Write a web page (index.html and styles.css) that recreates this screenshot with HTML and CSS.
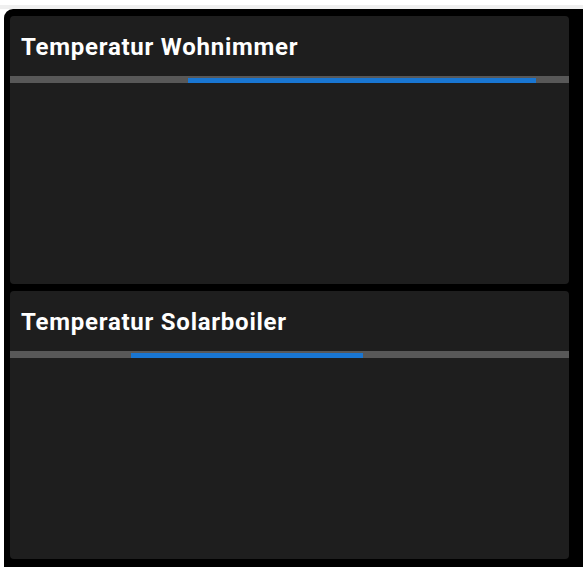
FILE: index.html
```html
<!DOCTYPE html>
<html>
<head>
<meta charset="utf-8">
<link rel="stylesheet" href="styles.css">
</head>
<body>
<div class="topbar"></div>
<main class="panel">
  <section class="card">
    <h2 class="card-title">Temperatur Wohnimmer</h2>
    <div class="progress"><div class="progress-fill" style="margin-left:178px;width:348px"></div></div>
    <div class="card-body"></div>
  </section>
  <section class="card">
    <h2 class="card-title">Temperatur Solarboiler</h2>
    <div class="progress"><div class="progress-fill" style="margin-left:121px;width:232px"></div></div>
    <div class="card-body"></div>
  </section>
</main>
</body>
</html>
```
FILE: styles.css
```css
html, body {
  margin: 0;
  padding: 0;
  background: #ffffff;
  height: 100%;
  overflow: hidden;
}
body {
  font-family: Roboto, "Noto Sans", sans-serif;
}
.topbar {
  height: 5px;
  background: #ffffff;
  border-bottom: 4px solid #efefef;
}
.panel {
  margin-left: 4px;
  background: #000000;
  border-radius: 9px 0 0 0;
  padding: 7px 14px 0 6px;
  display: flex;
  flex-direction: column;
  gap: 7px;
  height: calc(100vh - 9px);
  box-sizing: border-box;
}
.card {
  background: #1e1e1e;
  border-radius: 4px;
  display: flex;
  flex-direction: column;
  flex-shrink: 0;
}
.card-title {
  margin: 0;
  padding: 18px 11px 0 11px;
  box-sizing: border-box;
  height: 60px;
  font-size: 24px;
  font-weight: 700;
  letter-spacing: 0.75px;
  color: #ffffff;
  line-height: 26px;
}
.progress {
  height: 7px;
  background: #585858;
  display: flex;
  align-items: flex-end;
}
.progress-fill {
  height: 5px;
  background: #1976d2;
}
.card-body {
  height: 201px;
}
```
